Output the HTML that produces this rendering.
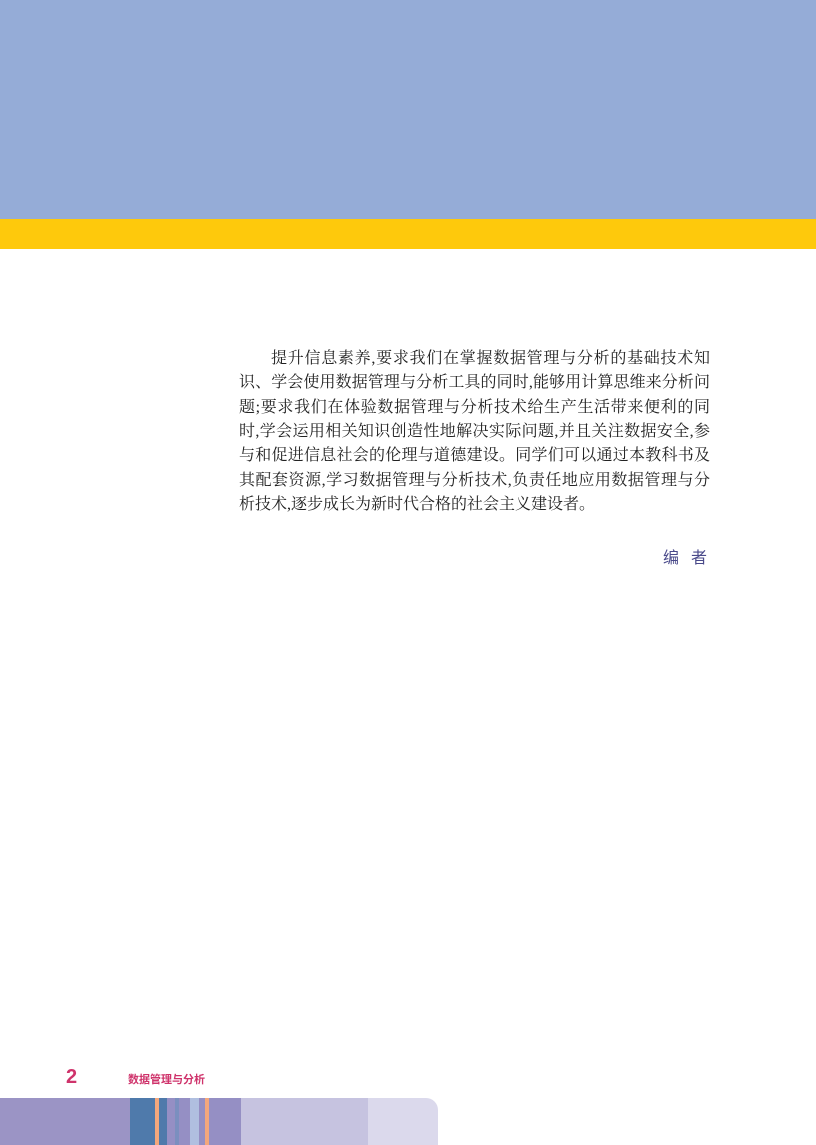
<!DOCTYPE html>
<html><head><meta charset="utf-8"><style>
html,body{margin:0;padding:0;}
body{width:816px;height:1145px;position:relative;background:#fff;overflow:hidden;font-family:"Liberation Serif","Noto Serif CJK SC",serif;}
.top{position:absolute;left:0;top:0;width:816px;height:219px;background:#95acd7;}
.yel{position:absolute;left:0;top:219px;width:816px;height:30px;background:#fec90c;}
.l{position:absolute;left:239px;width:471px;font-size:16px;line-height:20px;color:#222;text-align:justify;text-align-last:justify;text-justify:inter-character;white-space:nowrap;}
.b{position:absolute;top:0;height:47px;}
</style></head><body>
<div class="top"></div><div class="yel"></div>
<div class="l" style="top:349px;padding-left:32px;width:439px">提升信息素养,要求我们在掌握数据管理与分析的基础技术知</div>
<div class="l" style="top:373px">识、学会使用数据管理与分析工具的同时,能够用计算思维来分析问</div>
<div class="l" style="top:398px">题;要求我们在体验数据管理与分析技术给生产生活带来便利的同</div>
<div class="l" style="top:422px">时,学会运用相关知识创造性地解决实际问题,并且关注数据安全,参</div>
<div class="l" style="top:446px">与和促进信息社会的伦理与道德建设。同学们可以通过本教科书及</div>
<div class="l" style="top:471px">其配套资源,学习数据管理与分析技术,负责任地应用数据管理与分</div>
<div class="l" style="top:495px;text-align-last:left;width:auto">析技术,逐步成长为新时代合格的社会主义建设者。</div>
<div style="position:absolute;left:663px;top:549px;font-size:16px;line-height:20px;color:#4a4a8a;font-family:'Liberation Sans','Noto Sans CJK SC',sans-serif;letter-spacing:12px">编者</div>
<div style="position:absolute;left:66px;top:1066px;font:bold 20px/22px 'Liberation Sans',sans-serif;color:#cf336b">2</div>
<div style="position:absolute;left:128px;top:1073px;font:bold 11px/14px 'Liberation Sans','Noto Sans CJK SC',sans-serif;color:#cf336b">数据管理与分析</div>
<div style="position:absolute;left:0;top:1098px;width:438px;height:47px;border-top-right-radius:12px;overflow:hidden;">
<div class="b" style="left:0;width:130px;background:#9b94c5"></div>
<div class="b" style="left:130px;width:25px;background:#4f7aab"></div>
<div class="b" style="left:155px;width:4px;background:#f4a77c"></div>
<div class="b" style="left:159px;width:8px;background:#4f7aab"></div>
<div class="b" style="left:167px;width:8px;background:#958fc4"></div>
<div class="b" style="left:175px;width:4px;background:#7b8fbf"></div>
<div class="b" style="left:179px;width:11px;background:#958fc4"></div>
<div class="b" style="left:190px;width:9px;background:#b0bfe0"></div>
<div class="b" style="left:199px;width:6px;background:#958fc4"></div>
<div class="b" style="left:205px;width:4px;background:#f4a77c"></div>
<div class="b" style="left:209px;width:32px;background:#958fc4"></div>
<div class="b" style="left:241px;width:127px;background:#c6c3e0"></div>
<div class="b" style="left:368px;width:70px;background:#dbd9ec"></div>
</div>
</body></html>
